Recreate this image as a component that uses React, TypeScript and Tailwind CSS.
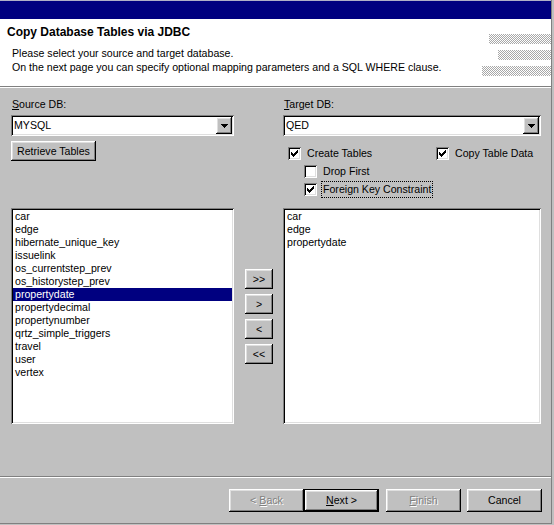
import React from "react";

const sunken =
  "shadow-[inset_1px_1px_0_#808080,inset_-1px_-1px_0_#ffffff,inset_2px_2px_0_#000000,inset_-2px_-2px_0_#dfdfdf]";
const raised =
  "shadow-[inset_-1px_-1px_0_#000000,inset_1px_1px_0_#ffffff,inset_-2px_-2px_0_#808080,inset_2px_2px_0_#dfdfdf]";
const raisedDefault =
  "shadow-[inset_0_0_0_1px_#000000,inset_-2px_-2px_0_#000000,inset_2px_2px_0_#ffffff,inset_-3px_-3px_0_#808080,inset_3px_3px_0_#dfdfdf]";

const sourceTables = [
  "car",
  "edge",
  "hibernate_unique_key",
  "issuelink",
  "os_currentstep_prev",
  "os_historystep_prev",
  "propertydate",
  "propertydecimal",
  "propertynumber",
  "qrtz_simple_triggers",
  "travel",
  "user",
  "vertex",
];
const targetTables = ["car", "edge", "propertydate"];

function Check() {
  // classic 7x7 check mark, one column at a time
  const cols = [2, 3, 4, 3, 2, 1, 0];
  return (
    <svg width="7" height="7" viewBox="0 0 7 7" shapeRendering="crispEdges">
      {cols.map((y, x) => (
        <rect key={x} x={x} y={y} width="1" height="3" fill="#000" />
      ))}
    </svg>
  );
}

function CheckBox({ checked, label, focus }: { checked: boolean; label: string; focus?: boolean }) {
  return (
    <div className="flex items-center h-[13px]">
      <div className={`w-[13px] h-[13px] bg-white flex items-center justify-center ${sunken}`}>
        {checked && <Check />}
      </div>
      <span
        className={`ml-[4px] leading-[15px] px-[1px] border border-dotted ${
          focus ? "border-black" : "border-transparent"
        }`}
      >
        {label}
      </span>
    </div>
  );
}

function Combo({ value, width }: { value: string; width: string }) {
  return (
    <div className={`${width} h-[21px] bg-white flex items-center pl-[3px] pr-[2px] ${sunken}`}>
      <span className="flex-1">{value}</span>
      <div className={`w-[16px] h-[17px] bg-[#c0c0c0] flex items-center justify-center ${raised}`}>
        <svg width="7" height="4" viewBox="0 0 7 4" shapeRendering="crispEdges">
          <path d="M0 0h7v1H0zM1 1h5v1H1zM2 2h3v1H2zM3 3h1v1H3z" fill="#000" />
        </svg>
      </div>
    </div>
  );
}

function Btn({
  children,
  w,
  h = "h-[23px]",
  disabled,
  isDefault,
}: {
  children: React.ReactNode;
  w: string;
  h?: string;
  disabled?: boolean;
  isDefault?: boolean;
}) {
  return (
    <div
      className={`${w} ${h} bg-[#c0c0c0] flex items-center justify-center ${isDefault ? raisedDefault : raised} ${
        disabled ? "text-[#808080] [text-shadow:1px_1px_0_#ffffff]" : "text-black"
      }`}
    >
      {children}
    </div>
  );
}

function ListBox({ items, width, selected }: { items: string[]; width: string; selected?: string }) {
  return (
    <div className={`${width} h-[216px] bg-white p-[2px] ${sunken}`}>
      {items.map((t) => (
        <div
          key={t}
          className={`h-[13px] leading-[13px] pl-[2px] ${t === selected ? "bg-[#000080] text-white" : ""}`}
        >
          {t}
        </div>
      ))}
    </div>
  );
}

function Hatch({ width, offset }: { width: number; offset: number }) {
  return (
    <svg width={width} height="10" style={{ marginLeft: offset }} shapeRendering="crispEdges">
      <defs>
        <pattern id={`h${offset}`} width="2" height="2" patternUnits="userSpaceOnUse">
          <rect width="2" height="2" fill="#ffffff" />
          <rect width="1" height="1" fill="#a8a8a8" />
          <rect x="1" y="1" width="1" height="1" fill="#a8a8a8" />
        </pattern>
      </defs>
      <rect width={width} height="10" fill={`url(#h${offset})`} />
    </svg>
  );
}

export default function App() {
  return (
    <div className="w-[554px] h-[525px] bg-[#c0c0c0] font-['Liberation_Sans',Arial,sans-serif] text-[10.6px] leading-[13px] text-black overflow-hidden">
      <div className="w-[552px] h-[524px] border-r border-b border-[#808080] flex flex-col">
        {/* title bar */}
        <div className="h-[19px] bg-[#000080] border-t border-[#b0b0c8] shrink-0" />

        {/* header */}
        <div className="h-[67px] bg-white relative shrink-0 pt-[7px]">
          <div className="pl-[7px] font-bold text-[12px] leading-[13px]">Copy Database Tables via JDBC</div>
          <div className="pl-[12px] mt-[7px] leading-[14px]">
            <div>Please select your source and target database.</div>
            <div>On the next page you can specify optional mapping parameters and a SQL WHERE clause.</div>
          </div>
          <div className="absolute right-0 top-[15px] w-[70px] flex flex-col items-end gap-[6px]">
            <Hatch width={62} offset={0} />
            <Hatch width={53} offset={1} />
            <Hatch width={69} offset={2} />
          </div>
        </div>
        <div className="h-[2px] border-t border-[#808080] border-b border-b-white shrink-0" />

        {/* body */}
        <div className="flex-1 flex flex-col">
          <div className="h-[120px] flex pl-[11px] pt-[10px]">
            <div className="w-[223px] flex flex-col">
              <div className="pl-[1px]">
                <span className="underline">S</span>ource DB:
              </div>
              <div className="mt-[4px]">
                <Combo value="MYSQL" width="w-[223px]" />
              </div>
              <div className="mt-[5px]">
                <Btn w="w-[85px]" h="h-[20px]">
                  Retrieve Tables
                </Btn>
              </div>
            </div>
            <div className="w-[258px] ml-[49px] flex flex-col">
              <div className="pl-[1px]">
                <span className="underline">T</span>arget DB:
              </div>
              <div className="mt-[4px]">
                <Combo value="QED" width="w-[258px]" />
              </div>
              <div className="mt-[11px] pl-[5px] flex flex-col gap-[5px]">
                <div className="flex">
                  <div className="w-[148px]">
                    <CheckBox checked label="Create Tables" />
                  </div>
                  <CheckBox checked label="Copy Table Data" />
                </div>
                <div className="pl-[16px] flex flex-col gap-[5px]">
                  <CheckBox checked={false} label="Drop First" />
                  <CheckBox checked label="Foreign Key Constraint" focus />
                </div>
              </div>
            </div>
          </div>

          <div className="flex pl-[11px]">
            <ListBox items={sourceTables} width="w-[223px]" selected="propertydate" />
            <div className="w-[49px] pl-[11px] pt-[61px] flex flex-col gap-[5px]">
              <Btn w="w-[28px]" h="h-[20px]">&gt;&gt;</Btn>
              <Btn w="w-[28px]" h="h-[20px]">&gt;</Btn>
              <Btn w="w-[28px]" h="h-[20px]">&lt;</Btn>
              <Btn w="w-[28px]" h="h-[20px]">&lt;&lt;</Btn>
            </div>
            <ListBox items={targetTables} width="w-[258px]" />
          </div>
        </div>

        {/* footer */}
        <div className="h-[2px] border-t border-[#808080] border-b border-b-white shrink-0" />
        <div className="h-[45px] shrink-0 flex pl-[229px] pt-[11px]">
          <Btn w="w-[75px]" disabled>
            &lt; <span className="underline ml-[3px]">B</span>ack
          </Btn>
          <Btn w="w-[75px]" isDefault>
            <span className="underline">N</span>ext &gt;
          </Btn>
          <div className="ml-[7px]">
            <Btn w="w-[75px]" disabled>
              <span className="underline">F</span>inish
            </Btn>
          </div>
          <div className="ml-[6px]">
            <Btn w="w-[75px]">Cancel</Btn>
          </div>
        </div>
      </div>
    </div>
  );
}
